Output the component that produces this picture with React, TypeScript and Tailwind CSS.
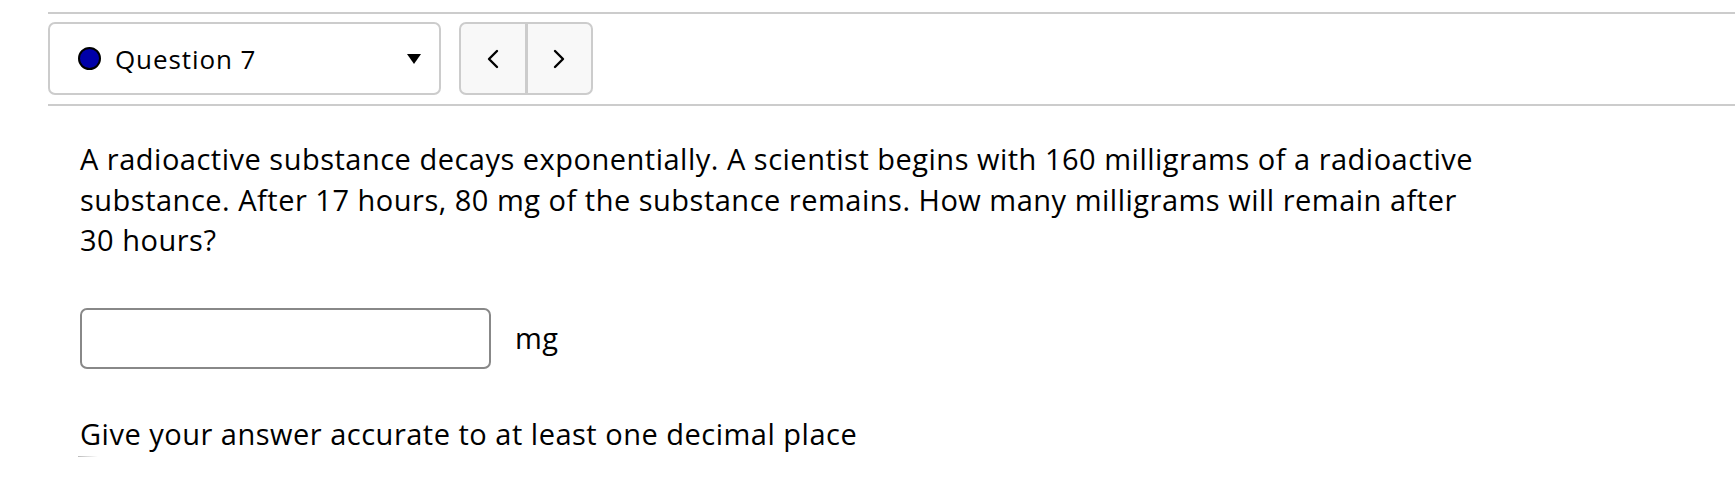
import React from "react";

const ChevronLeft = () => (
  <svg width="12" height="20" viewBox="0 0 12 20" fill="none">
    <polyline points="10,2 2,10 10,18" stroke="#000" strokeWidth="2.4" strokeLinecap="round" strokeLinejoin="round" />
  </svg>
);

const ChevronRight = () => (
  <svg width="12" height="20" viewBox="0 0 12 20" fill="none">
    <polyline points="2,2 10,10 2,18" stroke="#000" strokeWidth="2.4" strokeLinecap="round" strokeLinejoin="round" />
  </svg>
);

export default function App() {
  return (
    <div
      className="min-h-[482px] w-full bg-white text-black"
      style={{ fontFamily: '"Open Sans", "Liberation Sans", sans-serif' }}
    >
      <div className="pt-[12px] pl-[48px]">
        {/* question nav bar */}
        <div className="flex items-center gap-[18px] border-y-2 border-[#cccccc] pt-[8px] pb-[9px]">
          <button className="flex h-[73px] w-[393px] items-center rounded-[7px] border-2 border-[#cccccc] bg-white pl-[28px] pr-[18px]">
            <span className="h-[23px] w-[23px] rounded-full border-2 border-black bg-[#0000a8]" />
            <span className="ml-[14px] text-[26px] leading-none tracking-[0.9px]">Question 7</span>
            <span className="ml-auto h-0 w-0 border-x-[7.5px] border-t-[10px] border-x-transparent border-t-black" />
          </button>
          <div className="flex h-[73px] w-[134px] overflow-hidden rounded-[7px] border-2 border-[#cccccc] bg-[#f8f8f8]">
            <button className="flex flex-1 items-center justify-center border-r-[3px] border-[#cccccc]">
              <ChevronLeft />
            </button>
            <button className="flex flex-1 items-center justify-center">
              <ChevronRight />
            </button>
          </div>
        </div>

        {/* question body */}
        <div className="pl-[32px] pt-[33px] text-[29px] leading-[40.5px] tracking-[0.5px]">
          <p className="max-w-[1402px]">
            A radioactive substance decays exponentially. A scientist begins with 160 milligrams of a radioactive
            substance. After 17 hours, 80 mg of the substance remains. How many milligrams will remain after 30
            hours?
          </p>
          <div className="mt-[47px] flex items-center gap-[24px]">
            <input
              type="text"
              className="h-[61px] w-[411px] rounded-[7px] border-2 border-[#888888] bg-white px-3 outline-none"
            />
            <span>mg</span>
          </div>
          <p className="mt-[45px]">Give your answer accurate to at least one decimal place</p>
          <div className="-ml-[2px] mt-[2px] h-[1px] w-[20px] bg-gradient-to-r from-[#bbbbbb] to-transparent" />
        </div>
      </div>
    </div>
  );
}
